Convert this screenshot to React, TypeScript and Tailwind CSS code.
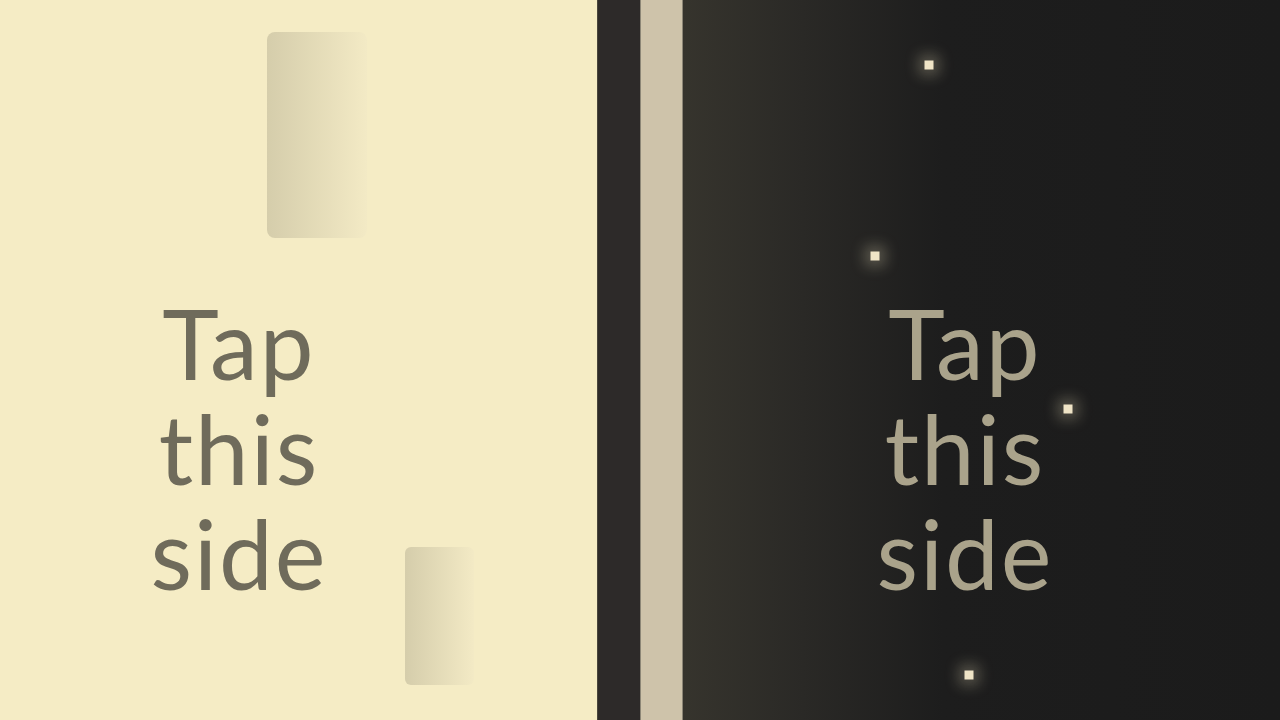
import React from "react";

const sparks = [
  { left: 929 - 683, top: 65 },
  { left: 875 - 683, top: 256 },
  { left: 1068 - 683, top: 409 },
  { left: 969 - 683, top: 675 },
];

export default function App() {
  return (
    <div
      className="flex h-[720px] w-[1280px] overflow-hidden"
      style={{ fontFamily: "Lato, 'Noto Sans', sans-serif" }}
    >
      {/* light half */}
      <div className="relative h-full w-[597px] shrink-0 bg-[#f5ecc5]">
        <div className="absolute left-[267px] top-[32px] h-[206px] w-[100px] rounded-[8px] bg-gradient-to-r from-[#d5cdab] to-[#f3eac5]" />
        <div className="absolute left-[405px] top-[547px] h-[138px] w-[69px] rounded-[6px] bg-gradient-to-r from-[#d5cdab] to-[#f3eac5]" />
        <div className="relative ml-[139px] w-[200px] pt-[290px] text-center text-[96px] leading-[105px] tracking-[2px] text-[#6f6b5b]">
          <div>Tap</div>
          <div>this</div>
          <div>side</div>
        </div>
      </div>

      {/* divider */}
      <div className="h-full w-[43px] shrink-0 border-l border-[#4a463c] bg-[#2d2a29]" />
      <div className="h-full w-[43px] shrink-0 border-x border-[#8c8676] bg-[#cec3aa]" />

      {/* dark half */}
      <div className="relative h-full flex-1 bg-[linear-gradient(to_right,#36342d_0px,#2a2926_120px,#1d1d1d_260px,#1b1b1b_100%)]">
        {sparks.map((s, i) => (
          <div
            key={i}
            className="absolute h-[9px] w-[9px] -translate-x-1/2 -translate-y-1/2 bg-[#efe4c6] shadow-[0_0_14px_6px_rgba(235,222,185,0.28)]"
            style={{ left: s.left, top: s.top }}
          />
        ))}
        <div className="ml-[182px] w-[200px] pt-[290px] text-center text-[96px] leading-[105px] tracking-[2px] text-[#aaa38b]">
          <div>Tap</div>
          <div>this</div>
          <div>side</div>
        </div>
      </div>
    </div>
  );
}
